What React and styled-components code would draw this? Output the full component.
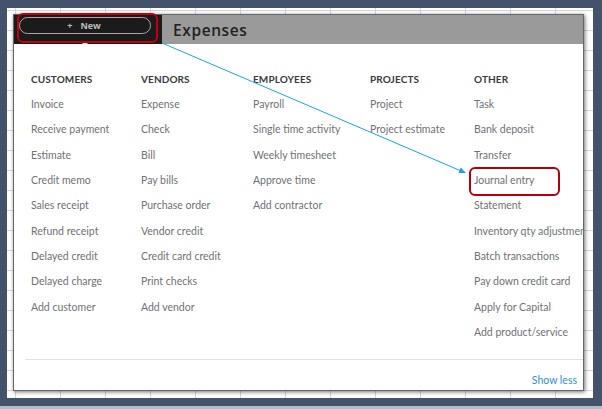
import React from 'react';
import styled, { createGlobalStyle } from 'styled-components';

const Global = createGlobalStyle`
  html, body { margin: 0; padding: 0; }
  body {
    width: 602px;
    height: 409px;
    overflow: hidden;
    background: #44536b;
    font-family: Lato, "Open Sans", sans-serif;
  }
`;

const Frame = styled.div`
  box-sizing: border-box;
  width: 602px;
  height: 409px;
  padding: 8px 9px 11px 7px;
  background: #44536b;
  box-shadow: inset 0 -3px 0 #b7bcc4;
`;

const Sheet = styled.div`
  box-sizing: border-box;
  height: 100%;
  padding: 7px 10px 8px 7px;
  background-color: #fff;
  background-image:
    linear-gradient(to right, #d3d7dc 1px, transparent 1px),
    linear-gradient(to bottom, #d3d7dc 1px, transparent 1px);
  background-size: 45px 100%, 100% 20px;
  background-position: 8px 0, 0 2px;
`;

const Panel = styled.div`
  position: relative;
  height: 100%;
  display: flex;
  flex-direction: column;
  background: #fff;
  box-shadow: 0 0 0 1px #666, 1px 1px 4px 1px rgba(0, 0, 0, 0.55);
`;

const Header = styled.div`
  display: flex;
  height: 29px;
  flex: none;
`;

const NewArea = styled.div`
  position: relative;
  width: 148px;
  box-sizing: border-box;
  padding: 2px 0 0 5px;
  background: #1b1b1b;
`;

const NewButton = styled.div`
  box-sizing: border-box;
  width: 132px;
  height: 17px;
  border: 1.5px solid #a8a8a8;
  border-radius: 9px;
  display: flex;
  align-items: center;
  justify-content: center;
  gap: 8px;
  padding-right: 2px;
  color: #bdbdbd;
  font-family: "Open Sans", sans-serif;
  font-size: 9px;
  font-weight: 700;
`;

const Outline = styled.div`
  position: absolute;
  left: 3px;
  top: -2px;
  width: 141px;
  height: 30px;
  box-sizing: border-box;
  border: 2px solid #c0000e;
  border-radius: 6px;
  pointer-events: none;
`;

const Caret = styled.div`
  position: absolute;
  left: 67px;
  top: 28px;
  width: 8px;
  height: 5px;
  border-radius: 50% 50% 0 0;
  background: #fff;
`;

const TitleBar = styled.div`
  flex: 1;
  display: flex;
  align-items: center;
  padding-left: 11px;
  background: #9a9a9a;
  color: #222;
  font-family: "Open Sans", sans-serif;
  font-size: 15.5px;
  font-weight: 600;
  letter-spacing: 0.6px;
`;

const Body = styled.div`
  flex: 1;
  display: flex;
  flex-direction: column;
  overflow: hidden;
`;

const Columns = styled.div`
  flex: 1;
  display: grid;
  grid-template-columns: 110px 112px 117px 104px 1fr;
  padding: 23px 0 0 17px;
`;

const Column = styled.div`
  display: flex;
  flex-direction: column;
  min-width: 0;
`;

const Heading = styled.div`
  height: 25px;
  line-height: 25px;
  font-size: 10px;
  font-weight: 700;
  color: #393a3d;
  letter-spacing: 0.1px;
`;

const Item = styled.div`
  position: relative;
  height: 25.33px;
  line-height: 25.33px;
  font-size: 10.5px;
  color: #707176;
  white-space: nowrap;

  ${(p) =>
    p.$marked &&
    `
    &::after {
      content: '';
      position: absolute;
      left: -5px;
      top: -1px;
      width: 91px;
      height: 29px;
      box-sizing: border-box;
      border: 2px solid #b5000c;
      border-radius: 6px;
    }
  `}
`;

const Footer = styled.div`
  flex: none;
  height: 31px;
  margin-left: 11px;
  border-top: 1px solid #e2e2e2;
  box-sizing: border-box;
  display: flex;
  justify-content: flex-end;
  padding: 13px 6px 0 0;
`;

const ShowLess = styled.a`
  font-size: 10.5px;
  line-height: 14px;
  color: #2d8fd5;
  text-decoration: none;
  cursor: pointer;
`;

const Pointer = styled.svg`
  position: absolute;
  left: 0;
  top: 0;
  width: 100%;
  height: 100%;
  pointer-events: none;
  overflow: visible;
`;

const menu = [
  {
    title: 'Customers',
    items: ['Invoice', 'Receive payment', 'Estimate', 'Credit memo', 'Sales receipt', 'Refund receipt', 'Delayed credit', 'Delayed charge', 'Add customer'],
  },
  {
    title: 'Vendors',
    items: ['Expense', 'Check', 'Bill', 'Pay bills', 'Purchase order', 'Vendor credit', 'Credit card credit', 'Print checks', 'Add vendor'],
  },
  {
    title: 'Employees',
    items: ['Payroll', 'Single time activity', 'Weekly timesheet', 'Approve time', 'Add contractor'],
  },
  {
    title: 'Projects',
    items: ['Project', 'Project estimate'],
  },
  {
    title: 'Other',
    items: ['Task', 'Bank deposit', 'Transfer', 'Journal entry', 'Statement', 'Inventory qty adjustment', 'Batch transactions', 'Pay down credit card', 'Apply for Capital', 'Add product/service'],
  },
];

export default function App() {
  return (
    <>
      <Global />
      <Frame>
        <Sheet>
          <Panel>
            <Header>
              <NewArea>
                <NewButton>
                  <span>+</span>
                  <span>New</span>
                </NewButton>
                <Outline />
                <Caret />
              </NewArea>
              <TitleBar>Expenses</TitleBar>
            </Header>
            <Body>
              <Columns>
                {menu.map((col) => (
                  <Column key={col.title}>
                    <Heading>{col.title.toUpperCase()}</Heading>
                    {col.items.map((it) => (
                      <Item key={it} $marked={it === 'Journal entry'}>
                        {it}
                      </Item>
                    ))}
                  </Column>
                ))}
              </Columns>
              <Footer>
                <ShowLess>Show less</ShowLess>
              </Footer>
            </Body>
            <Pointer viewBox="0 0 569 375" preserveAspectRatio="none">
              <line x1="148" y1="28" x2="446" y2="155.5" stroke="#19a4ea" strokeWidth="1" />
              <polygon points="452,158 446.7,152.5 444.4,158" fill="#19a4ea" />
            </Pointer>
          </Panel>
        </Sheet>
      </Frame>
    </>
  );
}
